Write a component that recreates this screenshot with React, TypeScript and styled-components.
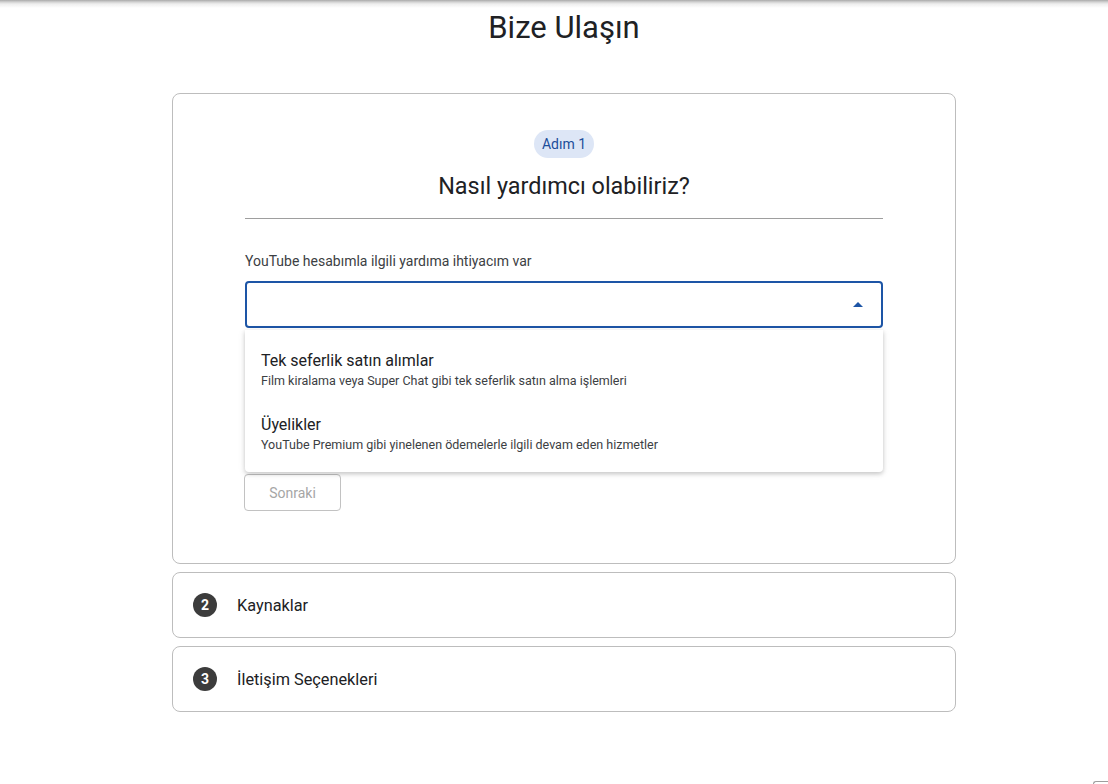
import React, { useState } from "react";
import styled, { createGlobalStyle } from "styled-components";

const GlobalStyle = createGlobalStyle`
  html, body {
    margin: 0;
    padding: 0;
    background: #ffffff;
  }
  body {
    font-family: Roboto, "Noto Sans", Arial, sans-serif;
    color: #202124;
  }
`;

interface Option {
  title: string;
  description: string;
}

const options: Option[] = [
  {
    title: "Tek seferlik satın alımlar",
    description:
      "Film kiralama veya Super Chat gibi tek seferlik satın alma işlemleri",
  },
  {
    title: "Üyelikler",
    description:
      "YouTube Premium gibi yinelenen ödemelerle ilgili devam eden hizmetler",
  },
];

const steps = [
  { number: 2, title: "Kaynaklar" },
  { number: 3, title: "İletişim Seçenekleri" },
];

const App: React.FC = () => {
  const [open, setOpen] = useState(true);

  return (
    <>
      <GlobalStyle />
      <HeaderShade />
      <Content>
        <Page>
          <PageTitle>Bize Ulaşın</PageTitle>

          <StepCard>
            <ActiveStep>
              <StepBadge>Adım 1</StepBadge>
              <StepTitle>Nasıl yardımcı olabiliriz?</StepTitle>
              <Divider />

              <FieldLabel>YouTube hesabımla ilgili yardıma ihtiyacım var</FieldLabel>
              <SelectWrap>
                <SelectBox $focused={open} onClick={() => setOpen(!open)}>
                  <Caret $up={open} />
                </SelectBox>
                {open && (
                  <Menu>
                    {options.map((option) => (
                      <MenuItem key={option.title} onClick={() => setOpen(false)}>
                        <MenuTitle>{option.title}</MenuTitle>
                        <MenuDescription>{option.description}</MenuDescription>
                      </MenuItem>
                    ))}
                  </Menu>
                )}
              </SelectWrap>

              <Actions>
                <NextButton disabled>Sonraki</NextButton>
              </Actions>
            </ActiveStep>
          </StepCard>

          {steps.map((step) => (
            <StepCard key={step.number}>
              <CollapsedStep>
                <StepNumber>{step.number}</StepNumber>
                <CollapsedTitle>{step.title}</CollapsedTitle>
              </CollapsedStep>
            </StepCard>
          ))}
        </Page>
      </Content>
      <FloatingTab />
    </>
  );
};

export default App;

const HeaderShade = styled.div`
  height: 8px;
  background: linear-gradient(
    to bottom,
    #a9a9a9 0px,
    #d2d2d2 2px,
    #eeeeee 4px,
    #ffffff 8px
  );
`;

const Content = styled.div`
  padding-left: 20px;
`;

const Page = styled.main`
  width: 784px;
  margin: 0 auto;
  padding-bottom: 72px;
  display: flex;
  flex-direction: column;
  gap: 8px;
`;

const PageTitle = styled.h1`
  margin: 0 0 37px;
  font-size: 31px;
  line-height: 40px;
  font-weight: 400;
  text-align: center;
  color: #202124;
`;

const StepCard = styled.section`
  border: 1px solid #bdbdbd;
  border-radius: 8px;
  background: #ffffff;
`;

const ActiveStep = styled.div`
  padding: 36px 72px 52px;
  display: flex;
  flex-direction: column;
`;

const StepBadge = styled.span`
  align-self: center;
  height: 28px;
  padding: 0 8px;
  border-radius: 14px;
  background: #dde6f6;
  color: #1c4d9a;
  font-size: 14px;
  line-height: 28px;
`;

const StepTitle = styled.h2`
  margin: 14px 0 0;
  font-size: 23.4px;
  line-height: 28px;
  font-weight: 400;
  text-align: center;
  color: #202124;
`;

const Divider = styled.hr`
  margin: 18px 0 0;
  border: none;
  border-top: 1px solid #9e9e9e;
`;

const FieldLabel = styled.label`
  margin-top: 32px;
  font-size: 14px;
  line-height: 20px;
  color: #3c4043;
`;

const SelectWrap = styled.div`
  position: relative;
  margin-top: 10px;
`;

const SelectBox = styled.div<{ $focused: boolean }>`
  height: 47px;
  box-sizing: border-box;
  border: 2px solid ${({ $focused }) => ($focused ? "#1d55a6" : "#9e9e9e")};
  border-radius: 4px;
  display: flex;
  align-items: center;
  justify-content: flex-end;
  padding-right: 18px;
  cursor: pointer;
`;

const Caret = styled.span<{ $up: boolean }>`
  width: 0;
  height: 0;
  border-left: 5px solid transparent;
  border-right: 5px solid transparent;
  ${({ $up }) =>
    $up
      ? "border-bottom: 5px solid #1d55a6;"
      : "border-top: 5px solid #5f6368;"}
`;

const Menu = styled.ul`
  position: absolute;
  top: calc(100% + 2px);
  left: 0;
  right: 0;
  z-index: 10;
  margin: 0;
  padding: 8px 0 6px;
  list-style: none;
  background: #ffffff;
  border-radius: 0 0 4px 4px;
  box-shadow: 0 2px 4px rgba(0, 0, 0, 0.18), 0 1px 8px rgba(0, 0, 0, 0.08);
`;

const MenuItem = styled.li`
  padding: 12px 16px;
  cursor: pointer;

  &:hover {
    background: #f5f5f5;
  }
`;

const MenuTitle = styled.div`
  font-size: 16px;
  line-height: 22px;
  color: #202124;
`;

const MenuDescription = styled.div`
  font-size: 12.5px;
  line-height: 18px;
  color: #3c4043;
`;

const Actions = styled.div`
  margin-top: 146px;
  margin-left: -1px;
  display: flex;
`;

const NextButton = styled.button`
  width: 97px;
  height: 37px;
  border: 1px solid #c2c2c2;
  border-radius: 4px;
  background: #ffffff;
  color: #a6a6a6;
  font-family: Roboto, "Noto Sans", Arial, sans-serif;
  font-size: 14px;
  cursor: default;
`;

const CollapsedStep = styled.div`
  height: 64px;
  padding: 0 20px;
  display: flex;
  align-items: center;
  gap: 20px;
`;

const StepNumber = styled.span`
  width: 24px;
  height: 24px;
  border-radius: 50%;
  background: #3c3c3c;
  color: #ffffff;
  font-size: 14px;
  font-weight: 700;
  display: flex;
  align-items: center;
  justify-content: center;
`;

const CollapsedTitle = styled.span`
  font-size: 16.3px;
  font-weight: 400;
  color: #202124;
`;

const FloatingTab = styled.div`
  position: fixed;
  right: 0;
  bottom: -40px;
  width: 14px;
  height: 42px;
  border-top: 1px solid #9e9e9e;
  border-left: 1px solid #9e9e9e;
  border-top-left-radius: 3px;
  background: #ffffff;
`;
